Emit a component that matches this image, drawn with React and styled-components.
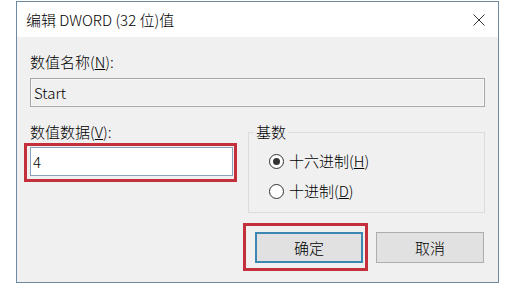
import React from 'react';
import styled, { createGlobalStyle, css } from 'styled-components';

const Global = createGlobalStyle`
  html, body { margin: 0; padding: 0; background: #fff; }
  body { font-family: "Noto Sans CJK SC", "Noto Sans", sans-serif; font-weight: 300; color: #000; }
  * { box-sizing: border-box; }
`;

const highlight = css`
  position: relative;
  &::after {
    content: "";
    position: absolute;
    border: 3px solid #c3303b;
    pointer-events: none;
  }
`;

const Page = styled.div`
  padding: 1px 0 0 16px;
`;

const Window = styled.div`
  width: 483px;
  height: 282px;
  border: 1px solid #6e8aa3;
  background: #f0f0f0;
  display: flex;
  flex-direction: column;
`;

const TitleBar = styled.div`
  height: 35px;
  flex: none;
  background: #fff;
  display: flex;
  align-items: center;
  justify-content: space-between;
  padding: 0 13px 0 9px;
  font-size: 15px;
  line-height: 20px;
`;

const Body = styled.div`
  padding: 15px 13px 0 13px;
  display: flex;
  flex-direction: column;
`;

const Label = styled.div`
  font-size: 15px;
  line-height: 20px;
  white-space: nowrap;
`;

const TextBox = styled.div`
  height: 29px;
  margin-top: ${p => p.$gap}px;
  border: 1px solid ${p => (p.$disabled ? '#a8a8a8' : '#8aa2b8')};
  box-shadow: ${p => (p.$disabled ? 'inset 0 0 0 1px #f7f7f7' : 'none')};
  background: ${p => (p.$disabled ? '#f0f0f0' : '#fff')};
  font-size: 15px;
  line-height: 27px;
  padding-left: ${p => (p.$disabled ? 3 : 2)}px;
  ${p => p.$highlight && highlight}
  &::after { top: -5px; right: -5px; bottom: -7px; left: -7px; }
`;

const Row = styled.div`
  margin-top: 15px;
  display: grid;
  grid-template-columns: 203px 1fr;
  column-gap: 15px;
  align-items: start;
`;

const Column = styled.div`
  display: flex;
  flex-direction: column;
`;

const Group = styled.fieldset`
  margin: 0;
  min-inline-size: 0;
  border: 1px solid #dcdcdc;
  padding: 4px 0 6px 5px;
`;

const Legend = styled.legend`
  padding: 0 2px;
  font-size: 15px;
  line-height: 20px;
`;

const RadioRow = styled.div`
  height: 30px;
  display: flex;
  align-items: center;
  gap: 5px;
  padding-left: 15px;
  font-size: 15px;
  line-height: 20px;
`;

const RadioCircle = styled.span`
  width: 15px;
  height: 15px;
  border-radius: 50%;
  border: 1px solid #333;
  background: #fff;
  display: flex;
  align-items: center;
  justify-content: center;
  &::before {
    content: "";
    width: 7px;
    height: 7px;
    border-radius: 50%;
    background: ${p => (p.$checked ? '#333' : 'transparent')};
  }
`;

const ButtonBar = styled.div`
  margin-top: 19px;
  display: flex;
  justify-content: flex-end;
  gap: 13px;
  padding-right: 1px;
`;

const Button = styled.div`
  width: 108px;
  height: 31px;
  display: flex;
  align-items: center;
  justify-content: center;
  background: #e1e1e1;
  border: ${p => (p.$default ? '2px solid #3c87b2' : '1px solid #adadad')};
  font-size: 15px;
  line-height: 20px;
  ${p => p.$highlight && highlight}
  &::after { top: -11px; right: -7px; bottom: -10px; left: -14px; }
`;

const CloseIcon = () => (
  <svg width="12" height="12" viewBox="0 0 12 12">
    <path d="M0.5 0.5 L11.5 11.5 M11.5 0.5 L0.5 11.5" stroke="#333" strokeWidth="1" fill="none" />
  </svg>
);

export default function App() {
  return (
    <>
      <Global />
      <Page>
        <Window>
          <TitleBar>
            <span>编辑 DWORD (32 位)值</span>
            <CloseIcon />
          </TitleBar>
          <Body>
            <Label>数值名称(<u>N</u>):</Label>
            <TextBox $gap={6} $disabled>Start</TextBox>
            <Row>
              <Column>
                <Label>数值数据(<u>V</u>):</Label>
                <TextBox $gap={5} $highlight>4</TextBox>
              </Column>
              <Group>
                <Legend>基数</Legend>
                <RadioRow>
                  <RadioCircle $checked />
                  <span>十六进制(<u>H</u>)</span>
                </RadioRow>
                <RadioRow>
                  <RadioCircle />
                  <span>十进制(<u>D</u>)</span>
                </RadioRow>
              </Group>
            </Row>
            <ButtonBar>
              <Button $default $highlight>确定</Button>
              <Button>取消</Button>
            </ButtonBar>
          </Body>
        </Window>
      </Page>
    </>
  );
}
